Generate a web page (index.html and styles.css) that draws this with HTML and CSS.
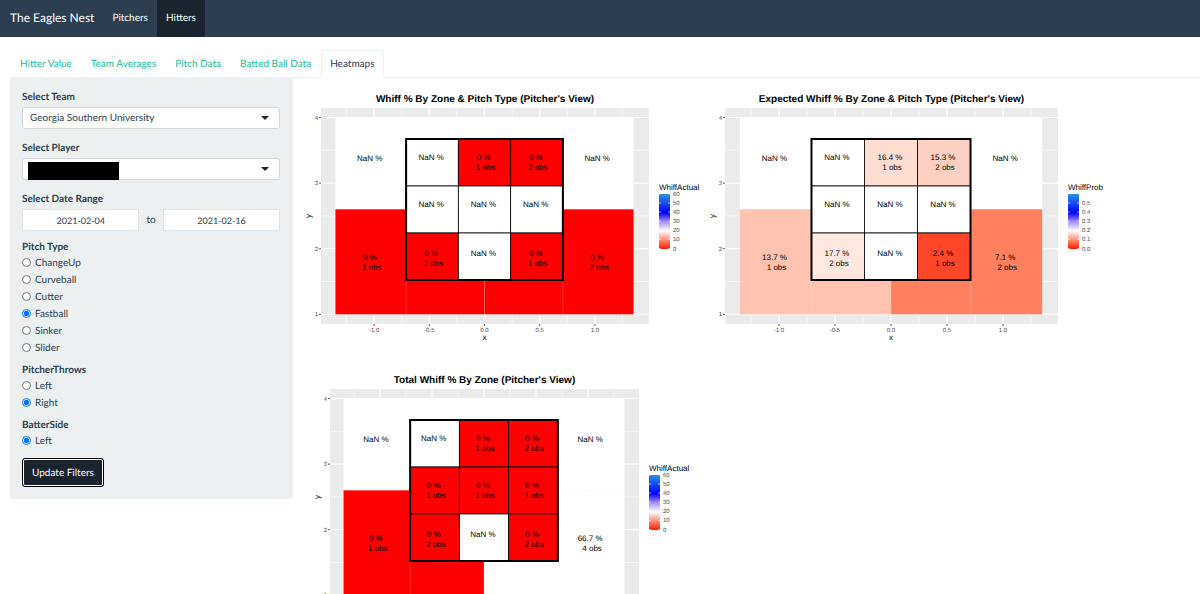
FILE: index.html
```html
<!DOCTYPE html>
<html lang="en">
<head>
	<title>The Eagles Nest</title>
	<meta charset="utf-8"/>
	<link rel="stylesheet" href="styles.css">
</head>
<body>
	<nav class="navbar">
		<a class="brand" href="#">The Eagles Nest</a>
		<a href="#">Pitchers</a>
		<a class="active" href="#">Hitters</a>
	</nav>

	<div class="container">
		<ul class="tabs">
			<li><a href="#">Hitter Value</a></li>
			<li><a href="#">Team Averages</a></li>
			<li><a href="#">Pitch Data</a></li>
			<li><a href="#">Batted Ball Data</a></li>
			<li><a class="active" href="#">Heatmaps</a></li>
		</ul>

		<div class="row">
			<form class="sidebar">
				<div class="field">
					<label class="title" for="team">Select Team</label>
					<div class="select">
						<select id="team"><option>Georgia Southern University</option></select>
					</div>
				</div>
				<div class="field">
					<label class="title" for="player">Select Player</label>
					<div class="select">
						<select id="player"><option></option></select>
						<span class="redacted"></span>
					</div>
				</div>
				<div class="field dates">
					<label class="title" for="date_from">Select Date Range</label>
					<div class="daterange">
						<input type="text" id="date_from" value="2021-02-04">
						<label for="date_to">to</label>
						<input type="text" id="date_to" value="2021-02-16">
					</div>
				</div>
				<fieldset>
					<legend class="title">Pitch Type</legend>
					<label class="radio"><input type="radio" name="pitch">ChangeUp</label>
					<label class="radio"><input type="radio" name="pitch">Curveball</label>
					<label class="radio"><input type="radio" name="pitch">Cutter</label>
					<label class="radio"><input type="radio" name="pitch" checked>Fastball</label>
					<label class="radio"><input type="radio" name="pitch">Sinker</label>
					<label class="radio"><input type="radio" name="pitch">Slider</label>
				</fieldset>
				<fieldset>
					<legend class="title">PitcherThrows</legend>
					<label class="radio"><input type="radio" name="throws">Left</label>
					<label class="radio"><input type="radio" name="throws" checked>Right</label>
				</fieldset>
				<fieldset>
					<legend class="title">BatterSide</legend>
					<label class="radio"><input type="radio" name="side" checked>Left</label>
				</fieldset>
				<button type="button" class="btn">Update Filters</button>
			</form>

			<div class="plots">
				<div id="whiff" class="plot"></div>
				<div id="expected" class="plot"></div>
				<div id="total" class="plot"></div>
			</div>
		</div>
	</div>

	<script src="plots.js"></script>
</body>
</html>
```

FILE: styles.css
```css
*{
	box-sizing: border-box;
}

body{
	margin: 0;
	background: #fff;
	color: #2c3e50;
	font-family: Lato, "Liberation Sans", sans-serif;
	font-size: 10px;
	line-height: 14px;
	text-rendering: geometricPrecision;
}

a{
	text-decoration: none;
}

/* navbar */
.navbar{
	display: flex;
	height: 37px;
	padding-left: 1px;
	background: #2c3e50;
}

.navbar a{
	padding: 0 9px;
	color: #fff;
	line-height: 36px;
}

.navbar .brand{
	font-size: 12px;
}

.navbar .active{
	background: #1a242f;
}

.container{
	padding: 13px 10px 0;
}

/* tabs */
.tabs{
	display: flex;
	gap: 1px;
	margin: 0 -10px 0 0;
	padding: 0 0 0 1px;
	list-style: none;
	border-bottom: 1px solid #ecf0f1;
}

.tabs a{
	display: block;
	margin-bottom: -1px;
	padding: 6px 8px;
	border: 1px solid transparent;
	border-radius: 3px 3px 0 0;
	color: #18bc9c;
}

.tabs .active{
	border-color: #ecf0f1;
	border-bottom-color: #fff;
	background: #fff;
	color: #2c3e50;
}

.row{
	display: flex;
	align-items: flex-start;
	gap: 10px;
}

/* filters */
.sidebar{
	flex: 0 0 24%;
	padding: 12px 13px 12px 12px;
	background: #ecf0f1;
	border-radius: 3px;
}

.field{
	margin-bottom: 12px;
}

.dates{
	margin-bottom: 9px;
}

.title{
	display: block;
	margin-bottom: 3px;
	padding: 0;
	font-weight: bold;
}

.select{
	position: relative;
}

.select::after{
	content: "";
	position: absolute;
	top: 9px;
	right: 11px;
	border: 4px solid transparent;
	border-top-color: #222;
	border-bottom: 0;
	pointer-events: none;
}

.redacted{
	position: absolute;
	left: 6px;
	top: 4px;
	width: 91px;
	height: 18px;
	background: #000;
}

select, input[type=text]{
	display: block;
	width: 100%;
	height: 22px;
	margin: 0;
	border: 1px solid #d3d8dc;
	background: #fff;
	color: #2c3e50;
	font: inherit;
	text-rendering: inherit;
}

select{
	appearance: none;
	padding: 0 7px;
	border-radius: 3px;
}

.daterange{
	display: flex;
	align-items: center;
}

.daterange label{
	padding: 0 7px;
}

.daterange input[type=text]{
	flex: 1;
	min-width: 0;
	border-color: #dce4ec;
	font-size: 9px;
	text-align: center;
}

fieldset{
	margin: 0 0 7px;
	padding: 0;
	border: 0;
}

fieldset .title{
	margin-bottom: 0;
}

.radio{
	display: flex;
	align-items: center;
	gap: 4px;
	height: 17px;
}

.radio input{
	width: 9px;
	height: 9px;
	margin: 0;
}

.btn{
	display: block;
	height: 29px;
	margin-top: 9px;
	padding: 0 9px;
	border: 1px solid #000;
	border-radius: 3px;
	outline: 1px solid #fff;
	outline-offset: -2px;
	background: #1a242f;
	color: #fff;
	font: inherit;
	text-rendering: inherit;
}

/* plots */
.plots{
	flex: 1;
	display: grid;
	grid-template-columns: repeat(auto-fill, 404px);
	justify-items: center;
	padding-top: 6px;
}

.plot svg{
	display: block;
	font-family: "Liberation Sans", Arial, sans-serif;
}

.plot text{
	text-anchor: middle;
	font-size: 8px;
}

.plot .plot-title{
	font-size: 10px;
	font-weight: bold;
}

.plot .tick{
	font-size: 6px;
	fill: #4d4d4d;
}

.plot .end{
	text-anchor: end;
}

.plot .start{
	text-anchor: start;
}

.panel{
	fill: #ebebeb;
}

.major{
	stroke: #fff;
	stroke-width: 1.2;
}

.minor{
	stroke: #fff;
	stroke-width: .6;
}

.mark{
	stroke: #333;
	stroke-width: .8;
}

.seam{
	stroke: #fff;
	stroke-width: .5;
	opacity: .35;
}

.cell{
	stroke: #000;
	stroke-width: .8;
}

.zone{
	fill: none;
	stroke: #000;
	stroke-width: 2;
}
```

FILE: plots.js
```js
var RED = "#ff0000";
var NA = "#ffffff";

// cells run left to right, top to bottom: [fill, percent, observations]
// outer: top left, top right, bottom left, bottom right
var nan = [NA, "NaN %"];

var plots = [
	{
		id: "whiff",
		title: "Whiff % By Zone & Pitch Type (Pitcher's View)",
		width: 404, x0: 181.5, unit: 110.4, left: 18, right: 346,
		outer: [nan, nan, [RED, "0 %", 1], [RED, "0 %", 2]],
		inner: [
			nan, [RED, "0 %", 1], [RED, "0 %", 2],
			nan, nan, nan,
			[RED, "0 %", 2], nan, [RED, "0 %", 1]
		],
		legend: "WhiffActual",
		labels: ["0", "10", "20", "30", "40", "50", "60"]
	},
	{
		id: "expected",
		title: "Expected Whiff % By Zone & Pitch Type (Pitcher's View)",
		width: 404, x0: 184, unit: 112, left: 18, right: 351,
		outer: [nan, nan, ["#ffc3af", "13.7 %", 1], ["#ff7f5f", "7.1 %", 2]],
		inner: [
			nan, ["#ffddd1", "16.4 %", 1], ["#ffd0c1", "15.3 %", 2],
			nan, nan, nan,
			["#ffe8e0", "17.7 %", 2], nan, ["#ff4628", "2.4 %", 1]
		],
		legend: "WhiffProb",
		labels: ["0.0", "0.1", "0.2", "0.3", "0.4", "0.5"]
	},
	{
		id: "total",
		title: "Total Whiff % By Zone (Pitcher's View)",
		width: 386, x0: 172, unit: 104, left: 18, right: 327,
		outer: [nan, nan, [RED, "0 %", 1], [NA, "66.7 %", 4]],
		inner: [
			nan, [RED, "0 %", 1], [RED, "0 %", 2],
			[RED, "0 %", 1], [RED, "0 %", 1], [RED, "0 %", 1],
			[RED, "0 %", 2], nan, [RED, "0 %", 2]
		],
		legend: "WhiffActual",
		labels: ["0", "10", "20", "30", "40", "50", "60"]
	}
];

var TOP = 24, BOTTOM = 240, HEIGHT = 281;

function py(v){
	return 33.5 + (4 - v) * 65.6;
}

function line(x1, y1, x2, y2, cls){
	return '<line x1="' + x1 + '" y1="' + y1 + '" x2="' + x2 + '" y2="' + y2 + '" class="' + cls + '"/>';
}

function rect(x1, y1, x2, y2, cls, fill){
	return '<rect x="' + x1 + '" y="' + y1 + '" width="' + (x2 - x1) + '" height="' + (y2 - y1) + '"' +
		(cls ? ' class="' + cls + '"' : '') + (fill ? ' fill="' + fill + '"' : '') + '/>';
}

function text(x, y, str, cls){
	return '<text x="' + x + '" y="' + y + '"' + (cls ? ' class="' + cls + '"' : '') + '>' + str.replace("&", "&amp;") + '</text>';
}

function cellText(x, y, cell){
	var s = text(x, y, cell[1]);
	if(cell[2]) s += text(x + 2, y + 10, cell[2] + " obs");
	return s;
}

function draw(p){
	var s = "", i, v;
	function px(v){ return p.x0 + v * p.unit; }

	// panel and grid
	s += rect(p.left, TOP, p.right, BOTTOM, "panel");
	for(v=-1.25;v<=1.25;v+=0.25){
		s += line(px(v), TOP, px(v), BOTTOM, v % 0.5 == 0 ? "major" : "minor");
	}
	for(v=1;v<=4;v+=0.5){
		s += line(p.left, py(v), p.right, py(v), v % 1 == 0 ? "major" : "minor");
	}

	// outer quadrants
	s += rect(px(-1.35), py(4), px(0), py(2.6), "", p.outer[0][0]);
	s += rect(px(0), py(4), px(1.35), py(2.6), "", p.outer[1][0]);
	s += rect(px(-1.35), py(2.6), px(0), py(1), "", p.outer[2][0]);
	s += rect(px(0), py(2.6), px(1.35), py(1), "", p.outer[3][0]);
	for(v=-0.71;v<=0.71;v+=0.71){
		s += line(px(v), py(1.5), px(v), py(1), "seam");
	}
	s += cellText(px(-1.04), 77, p.outer[0]);
	s += cellText(px(1.02), 77, p.outer[1]);
	s += cellText(px(-1.04), 176, p.outer[2]);
	s += cellText(px(1.02), 176, p.outer[3]);

	// strike zone
	var xs = [px(-0.71), px(-0.237), px(0.237), px(0.71)];
	var ys = [55, 102, 149, 196];
	for(i=0;i<9;i++){
		var c = i % 3, r = Math.floor(i / 3);
		s += rect(xs[c], ys[r], xs[c+1], ys[r+1], "cell", p.inner[i][0]);
		s += cellText((xs[c] + xs[c+1]) / 2 - 1, [76, 123, 172][r], p.inner[i]);
	}
	s += rect(xs[0], ys[0], xs[3], ys[3], "zone");

	// axes
	for(v=-1;v<=1;v+=0.5){
		s += line(px(v), BOTTOM, px(v), BOTTOM + 2, "mark");
		s += text(px(v), 248, v.toFixed(1), "tick");
	}
	for(v=1;v<=4;v++){
		s += line(p.left - 2, py(v), p.left, py(v), "mark");
		s += text(p.left - 3, py(v) + 2, String(v), "tick end");
	}
	s += text(px(0), 256, "x");
	s += '<text transform="translate(8 132) rotate(-90)">y</text>';
	s += text((p.left + p.right) / 2, 18, p.title, "plot-title");

	// legend
	var lx = p.right + 10;
	s += '<defs><linearGradient id="g_' + p.id + '" x1="0" y1="1" x2="0" y2="0">' +
		'<stop offset="0" stop-color="#ff1a00"/><stop offset=".15" stop-color="#ff8468"/><stop offset=".33" stop-color="#fff"/>' +
		'<stop offset=".5" stop-color="#a48cff"/><stop offset=".66" stop-color="#0000ff"/><stop offset="1" stop-color="#2b92e6"/></linearGradient></defs>';
	s += text(lx, 106, p.legend, "start");
	s += rect(lx, 110, lx + 11, 165, "", "url(#g_" + p.id + ")");
	for(i=0;i<p.labels.length;i++){
		v = 164.5 - i * 9.1;
		s += line(lx, v, lx + 2, v, "minor") + line(lx + 9, v, lx + 11, v, "minor");
		s += text(lx + 14, v + 2, p.labels[i], "tick start");
	}

	document.getElementById(p.id).innerHTML =
		'<svg width="' + p.width + '" height="' + HEIGHT + '" viewBox="0 0 ' + p.width + ' ' + HEIGHT + '">' + s + '</svg>';
}

plots.forEach(draw);
```
